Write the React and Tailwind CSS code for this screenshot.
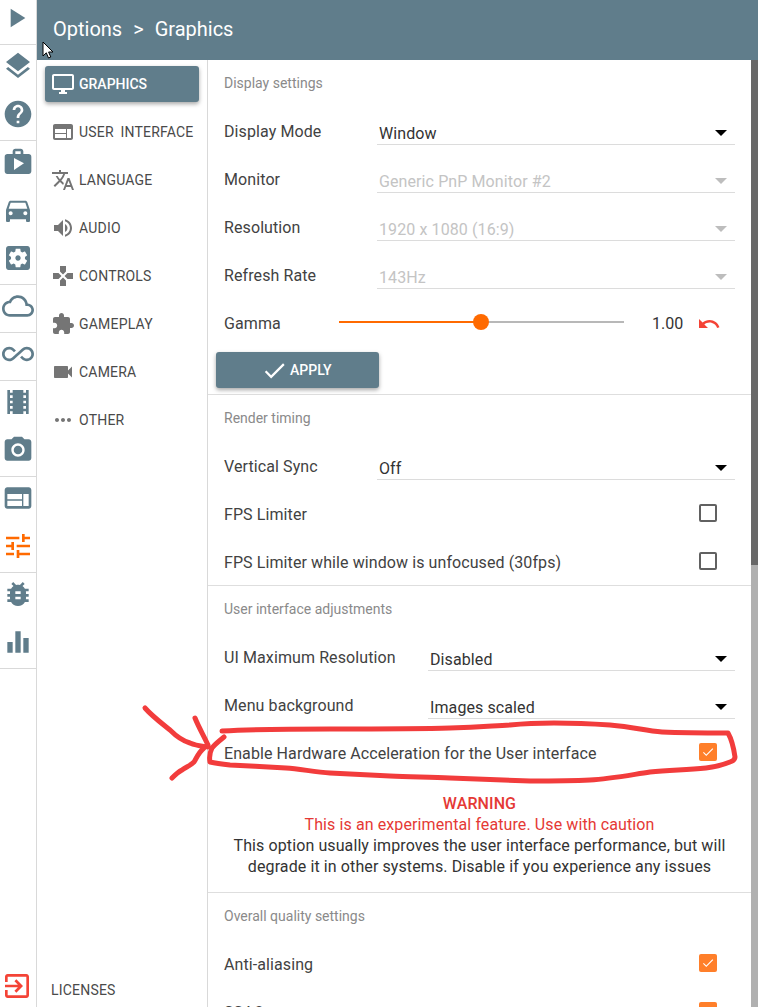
const icons = {
  play: "M8 5v14l11-7z",
  layers: "M11.99 18.54l-7.37-5.73L3 14.07l9 7 9-7-1.63-1.27-7.38 5.74zM12 16l7.36-5.73L21 9l-9-7-9 7 1.63 1.27L12 16z",
  help: "M12 2C6.48 2 2 6.48 2 12s4.48 10 10 10 10-4.48 10-10S17.52 2 12 2zm1 17h-2v-2h2v2zm2.07-7.75l-.9.92C13.45 12.9 13 13.5 13 15h-2v-.5c0-1.1.45-2.1 1.17-2.83l1.24-1.26c.37-.36.59-.86.59-1.41 0-1.1-.9-2-2-2s-2 .9-2 2H8c0-2.21 1.79-4 4-4s4 1.79 4 4c0 .88-.36 1.68-.93 2.25z",
  career: "M20 6h-4V4c0-1.11-.89-2-2-2h-4c-1.11 0-2 .89-2 2v2H4c-1.11 0-1.99.89-1.99 2L2 19c0 1.11.89 2 2 2h16c1.11 0 2-.89 2-2V8c0-1.11-.89-2-2-2zM10 4h4v2h-4V4zM9 18V9l7.5 4L9 18z",
  car: "M18.92 6.01C18.72 5.42 18.16 5 17.5 5h-11c-.66 0-1.21.42-1.42 1.01L3 12v8c0 .55.45 1 1 1h1c.55 0 1-.45 1-1v-1h12v1c0 .55.45 1 1 1h1c.55 0 1-.45 1-1v-8l-2.08-5.99zM6.5 16c-.83 0-1.5-.67-1.5-1.5S5.67 13 6.5 13s1.5.67 1.5 1.5S7.33 16 6.5 16zm11 0c-.83 0-1.5-.67-1.5-1.5s.67-1.5 1.5-1.5 1.5.67 1.5 1.5-.67 1.5-1.5 1.5zM5 11l1.5-4.5h11L19 11H5z",
  setup: "M12 10c-1.1 0-2 .9-2 2s.9 2 2 2 2-.9 2-2-.9-2-2-2zm7-7H5c-1.11 0-2 .9-2 2v14c0 1.1.89 2 2 2h14c1.11 0 2-.9 2-2V5c0-1.1-.89-2-2-2zm-1.75 9c0 .23-.02.46-.05.68l1.48 1.16c.13.11.17.3.08.45l-1.4 2.42c-.09.15-.27.21-.43.15l-1.74-.7c-.36.28-.76.51-1.18.69l-.26 1.85c-.03.17-.18.3-.35.3h-2.8c-.17 0-.32-.13-.35-.29l-.26-1.85c-.43-.18-.82-.41-1.18-.69l-1.74.7c-.16.06-.34 0-.43-.15l-1.4-2.42c-.09-.15-.05-.34.08-.45l1.48-1.16c-.03-.23-.05-.46-.05-.69 0-.23.02-.46.05-.68l-1.48-1.16c-.13-.11-.17-.3-.08-.45l1.4-2.42c.09-.15.27-.21.43-.15l1.74.7c.36-.28.76-.51 1.18-.69l.26-1.85c.03-.17.18-.3.35-.3h2.8c.17 0 .32.13.35.29l.26 1.85c.43.18.82.41 1.18.69l1.74-.7c.16-.06.34 0 .43.15l1.4 2.42c.09.15.05.34-.08.45l-1.48 1.16c.03.23.05.46.05.69z",
  cloud: "M19.35 10.04C18.67 6.59 15.64 4 12 4 9.11 4 6.6 5.64 5.35 8.04 2.34 8.36 0 10.91 0 14c0 3.31 2.69 6 6 6h13c2.76 0 5-2.24 5-5 0-2.64-2.05-4.78-4.65-4.96zM19 18H6c-2.21 0-4-1.79-4-4s1.79-4 4-4h.71C7.37 7.69 9.48 6 12 6c3.04 0 5.5 2.46 5.5 5.5v.5H19c1.66 0 3 1.34 3 3s-1.34 3-3 3z",
  infinity: "M18.6 6.62c-1.44 0-2.8.56-3.77 1.53L12 10.66 10.48 12h.01L7.8 14.39c-.64.64-1.49.99-2.4.99-1.87 0-3.39-1.51-3.39-3.38S3.53 8.62 5.4 8.62c.91 0 1.76.35 2.44 1.03l1.13 1 1.51-1.34L9.22 8.2C8.2 7.18 6.84 6.62 5.4 6.62 2.42 6.62 0 9.04 0 12s2.42 5.38 5.4 5.38c1.44 0 2.8-.56 3.77-1.53l2.83-2.5.01.01L13.52 12h-.01l2.69-2.39c.64-.64 1.49-.99 2.4-.99 1.87 0 3.39 1.51 3.39 3.38s-1.52 3.38-3.39 3.38c-.9 0-1.76-.35-2.44-1.03l-1.14-1.01-1.51 1.34 1.27 1.12c1.02 1.01 2.37 1.57 3.82 1.57 2.98 0 5.4-2.41 5.4-5.38s-2.42-5.37-5.4-5.37z",
  movie: "M18 3v2h-2V3H8v2H6V3H4v18h2v-2h2v2h8v-2h2v2h2V3h-2zM8 17H6v-2h2v2zm0-4H6v-2h2v2zm0-4H6V7h2v2zm10 8h-2v-2h2v2zm0-4h-2v-2h2v2zm0-4h-2V7h2v2z",
  camera: "M12 8.8a3.2 3.2 0 1 0 0 6.4 3.2 3.2 0 0 0 0-6.4zM9 2L7.17 4H4c-1.1 0-2 .9-2 2v12c0 1.1.9 2 2 2h16c1.1 0 2-.9 2-2V6c0-1.1-.9-2-2-2h-3.17L15 2H9zm3 15c-2.76 0-5-2.24-5-5s2.24-5 5-5 5 2.24 5 5-2.24 5-5 5z",
  web: "M20 4H4c-1.1 0-1.99.9-1.99 2L2 18c0 1.1.9 2 2 2h16c1.1 0 2-.9 2-2V6c0-1.1-.9-2-2-2zm-5 14H4v-4h11v4zm0-5H4V9h11v4zm5 5h-4V9h4v9z",
  tune: "M3 17v2h6v-2H3zM3 5v2h10V5H3zm10 16v-2h8v-2h-8v-2h-2v6h2zM7 9v2H3v2h4v2h2V9H7zm14 4v-2H11v2h10zm-6-4h2V7h4V5h-4V3h-2v6z",
  bug: "M20 8h-2.81c-.45-.78-1.07-1.45-1.82-1.96L17 4.41 15.59 3l-2.17 2.17C12.96 5.06 12.49 5 12 5c-.49 0-.96.06-1.41.17L8.41 3 7 4.41l1.62 1.63C7.88 6.55 7.26 7.22 6.81 8H4v2h2.09c-.05.33-.09.66-.09 1v1H4v2h2v1c0 .34.04.67.09 1H4v2h2.81c1.04 1.79 2.97 3 5.19 3s4.15-1.21 5.19-3H20v-2h-2.09c.05-.33.09-.66.09-1v-1h2v-2h-2v-1c0-.34-.04-.67-.09-1H20V8zm-6 8h-4v-2h4v2zm0-4h-4v-2h4v2z",
  chart: "M10 20h4V4h-4v16zm-6 0h4v-8H4v8zM16 9v11h4V9h-4z",
  exit: "M10.09 15.59L11.5 17l5-5-5-5-1.41 1.41L12.67 11H3v2h9.67l-2.58 2.59zM19 3H5c-1.11 0-2 .9-2 2v4h2V5h14v14H5v-4H3v4c0 1.1.89 2 2 2h14c1.1 0 2-.9 2-2V5c0-1.1-.9-2-2-2z",
  desktop: "M21 2H3c-1.1 0-2 .9-2 2v12c0 1.1.9 2 2 2h7v2H8v2h8v-2h-2v-2h7c1.1 0 2-.9 2-2V4c0-1.1-.9-2-2-2zm0 14H3V4h18v12z",
  translate: "M12.87 15.07l-2.54-2.51.03-.03c1.74-1.94 2.98-4.17 3.71-6.53H17V4h-7V2H8v2H1v1.99h11.17C11.5 7.92 10.44 9.75 9 11.35 8.07 10.32 7.3 9.19 6.69 8h-2c.73 1.63 1.73 3.17 2.98 4.56l-5.09 5.02L4 19l5-5 3.11 3.11.76-2.04zM18.5 10h-2L12 22h2l1.12-3h4.75L21 22h2l-4.5-12zm-2.62 7l1.62-4.33L19.12 17h-3.24z",
  volume: "M3 9v6h4l5 5V4L7 9H3zm13.5 3c0-1.77-1.02-3.29-2.5-4.03v8.05c1.48-.73 2.5-2.25 2.5-4.02zM14 3.23v2.06c2.89.86 5 3.54 5 6.71s-2.11 5.85-5 6.71v2.06c4.01-.91 7-4.49 7-8.77s-2.99-7.86-7-8.77z",
  gamepad: "M15 7.5V2H9v5.5l3 3 3-3zM7.5 9H2v6h5.5l3-3-3-3zM9 16.5V22h6v-5.5l-3-3-3 3zM16.5 9l-3 3 3 3H22V9h-5.5z",
  extension: "M20.5 11H19V7c0-1.1-.9-2-2-2h-4V3.5C13 2.12 11.88 1 10.5 1S8 2.12 8 3.5V5H4c-1.1 0-1.99.9-1.99 2v3.8H3.5c1.49 0 2.7 1.21 2.7 2.7s-1.21 2.7-2.7 2.7H2V20c0 1.1.9 2 2 2h3.8v-1.5c0-1.49 1.21-2.7 2.7-2.7 1.49 0 2.7 1.21 2.7 2.7V22H17c1.1 0 2-.9 2-2v-4h1.5c1.38 0 2.5-1.12 2.5-2.5S21.88 11 20.5 11z",
  videocam: "M17 10.5V7c0-.55-.45-1-1-1H4c-.55 0-1 .45-1 1v10c0 .55.45 1 1 1h12c.55 0 1-.45 1-1v-3.5l4 4v-11l-4 4z",
  more: "M6 10c-1.1 0-2 .9-2 2s.9 2 2 2 2-.9 2-2-.9-2-2-2zm12 0c-1.1 0-2 .9-2 2s.9 2 2 2 2-.9 2-2-.9-2-2-2zm-6 0c-1.1 0-2 .9-2 2s.9 2 2 2 2-.9 2-2-.9-2-2-2z",
  undo: "M12.5 8c-2.65 0-5.05.99-6.9 2.6L2 7v9h9l-3.62-3.62c1.39-1.16 3.16-1.88 5.12-1.88 3.54 0 6.55 2.31 7.6 5.5l2.37-.78C21.08 11.03 17.15 8 12.5 8z",
  done: "M9 16.2L4.8 12l-1.4 1.4L9 19 21 7l-1.4-1.4L9 16.2z",
};

function Icon({ name, className }) {
  return (
    <svg viewBox="0 0 24 24" fill="currentColor" className={className}>
      <path d={icons[name]} />
    </svg>
  );
}

const railGroups = [
  ["layers", "help"],
  ["career", "car", "setup"],
  ["cloud"],
  ["infinity"],
  ["movie", "camera"],
  ["web", "tune"],
  ["bug", "chart"],
];

const navItems = [
  ["desktop", "GRAPHICS"],
  ["web", "USER INTERFACE"],
  ["translate", "LANGUAGE"],
  ["volume", "AUDIO"],
  ["gamepad", "CONTROLS"],
  ["extension", "GAMEPLAY"],
  ["videocam", "CAMERA"],
  ["more", "OTHER"],
];

function Rail() {
  return (
    <div className="flex w-[37px] shrink-0 flex-col border-r border-[#d9d9d9] bg-white">
      <div className="flex h-[45px] items-center justify-center border-b border-[#d9d9d9] pb-[8px] text-[#607d8b]">
        <Icon name="play" className="h-8 w-8 -translate-x-0.5" />
      </div>
      {railGroups.map((group, i) => (
        <div key={i} className="border-b border-[#d9d9d9]">
          {group.map((name) => (
            <div
              key={name}
              className={`flex h-12 items-center justify-center pb-1.5 last:h-[47px] last:pb-[5px] ${name === "tune" ? "text-[#ff6a00]" : "text-[#607d8b]"}`}
            >
              <Icon name={name} className="h-8 w-8" />
            </div>
          ))}
        </div>
      ))}
      <div className="mt-auto flex h-[43px] items-start justify-center pt-1.5 text-[#f44336]">
        <Icon name="exit" className="h-8 w-8 -translate-x-px" />
      </div>
    </div>
  );
}

function SideNav() {
  return (
    <div className="flex w-[171px] shrink-0 flex-col border-r border-[#d9d9d9] pt-1.5 pl-2 pr-2">
      {navItems.map(([icon, label], i) => (
        <div
          key={label}
          className={`mb-3 flex h-9 items-center rounded-[3px] pl-1.5 text-sm [word-spacing:3px] ${
            i === 0 ? "bg-[#607d8b] font-medium text-white shadow-[0_2px_4px_rgba(0,0,0,0.35)]" : "tracking-[0.2px] text-[#4a4a4a]"
          }`}
        >
          <Icon name={icon} className={`mr-1 h-6 w-6 shrink-0 ${i === 0 ? "" : "text-[#757575]"}`} />
          {label}
        </div>
      ))}
      <div className="mt-auto mb-[7px] pl-1.5 text-sm tracking-[0.2px] text-[#4a4a4a]">LICENSES</div>
    </div>
  );
}

function Heading({ children }) {
  return <div className="flex h-[47px] items-center px-4 pb-0.5 text-sm text-[#8a8a8a]">{children}</div>;
}

function Select({ value, disabled, className }) {
  return (
    <div className={`relative flex h-6 items-center border-b border-[#dcdcdc] pl-0.5 text-base ${disabled ? "text-[#c4c4c4]" : "text-[#333333]"} ${className}`}>
      <span className="mt-[3px] tracking-[0.1px]">{value}</span>
      <span className={`absolute right-2 top-[9px] h-0 w-0 border-x-[6px] border-t-[6px] border-x-transparent ${disabled ? "border-t-[#bdbdbd]" : "border-t-black"}`} />
    </div>
  );
}

function SelectRow({ label, value, disabled, selectClass }) {
  return (
    <div className="flex h-12 items-center pl-4 pr-4 text-base text-[#424242]">
      <span className="mt-0.5 shrink-0 tracking-[0.1px]">{label}</span>
      <Select value={value} disabled={disabled} className={`ml-auto translate-y-0.5 ${selectClass}`} />
    </div>
  );
}

function CheckRow({ label, checked }) {
  return (
    <div className="flex h-12 items-center justify-between pl-4 pr-[34px] text-base text-[#424242]">
      <span className="mt-0.5 tracking-[0.09px]">{label}</span>
      {checked ? (
        <span className="mb-0.5 flex h-[18px] w-[18px] items-center justify-center rounded-[2px] bg-[#ff7f2a] text-white">
          <Icon name="done" className="h-3.5 w-3.5" />
        </span>
      ) : (
        <span className="mb-0.5 h-[18px] w-[18px] rounded-[2px] border-2 border-[#616161]" />
      )}
    </div>
  );
}

function Slider() {
  return (
    <div className="flex h-12 items-center pl-4 text-base text-[#424242]">
      <span className="mt-0.5 w-[115px] shrink-0 tracking-[0.1px]">Gamma</span>
      <div className="relative h-0.5 w-[285px] -translate-y-px bg-[#b8b8b8]">
        <div className="h-full w-[142px] bg-[#ff6a00]" />
        <span className="absolute left-[134px] top-[-7px] h-4 w-4 rounded-full bg-[#ff6a00]" />
      </div>
      <span className="ml-[28px] mt-0.5 text-[#333333]">1.00</span>
      <Icon name="undo" className="ml-[14px] mt-0.5 h-6 w-6 text-[#f44336]" />
    </div>
  );
}

function Annotation() {
  return (
    <svg viewBox="0 0 758 1007" className="pointer-events-none absolute inset-0 h-[1007px] w-[758px]" fill="none" stroke="#f23c3c" strokeWidth="5" strokeLinecap="round" strokeLinejoin="round">
      <path d="M222 731C260 729 300 729 330 729C370 729 420 729 450 728C480 727 490 726 510 725C530 723 540 723 554 723C575 723 595 724 610 725C635 727 645 731 662 732C685 733 705 733 728 733C732 740 734 750 735 757C735 760 733 761 730 762C720 766 715 767 706 768C685 770 670 770 650 772C630 775 610 779 590 780C570 781 550 781 530 781C500 780 475 779 450 778C430 777 410 777 390 776C370 775 350 774 330 773C315 772 300 769 286 768C265 767 250 766 230 765C222 764 215 763 210 762C209 757 210 752 212 748C215 744 219 741 224 737" />
      <path d="M145 708C152 716 160 722 170 730C177 737 183 741 190 743C197 746 202 746 208 747" />
      <path d="M195 718C199 728 204 736 208 745" />
      <path d="M204 748C199 752 197 757 194 762C190 766 186 767 182 770C178 772 175 775 172 778" />
    </svg>
  );
}

export default function App() {
  return (
    <div className="relative flex h-[1007px] w-[758px] overflow-hidden bg-white font-['Roboto',sans-serif]">
      <Rail />
      <div className="flex min-w-0 flex-1 flex-col">
        <div className="flex h-[60px] shrink-0 items-center bg-[#607d8b] pb-0.5 pl-4 text-xl text-white">
          <span>Options</span>
          <span className="mx-[11px]">&gt;</span>
          <span>Graphics</span>
        </div>
        <div className="flex min-h-0 flex-1">
          <SideNav />
          <div className="min-w-0 flex-1">
            <section className="border-b border-[#dedede]">
              <Heading>Display settings</Heading>
              <SelectRow label="Display Mode" value="Window" selectClass="w-[358px]" />
              <SelectRow label="Monitor" value="Generic PnP Monitor #2" disabled selectClass="w-[358px]" />
              <SelectRow label="Resolution" value="1920 x 1080 (16:9)" disabled selectClass="w-[358px]" />
              <SelectRow label="Refresh Rate" value="143Hz" disabled selectClass="w-[358px]" />
              <Slider />
              <div className="pb-1.5 pl-2 pt-[5px]">
                <button className="flex h-9 w-[163px] items-center rounded-[3px] bg-[#607d8b] pl-[45px] text-sm font-medium text-white shadow-[0_2px_4px_rgba(0,0,0,0.35)]">
                  <Icon name="done" className="mr-0.5 h-[27px] w-[27px]" />
                  APPLY
                </button>
              </div>
            </section>
            <section className="border-b border-[#dedede]">
              <Heading>Render timing</Heading>
              <SelectRow label="Vertical Sync" value="Off" selectClass="w-[358px]" />
              <CheckRow label="FPS Limiter" />
              <div className="-mb-px">
                <CheckRow label="FPS Limiter while window is unfocused (30fps)" />
              </div>
            </section>
            <section className="border-b border-[#dedede]">
              <Heading>User interface adjustments</Heading>
              <SelectRow label="UI Maximum Resolution" value="Disabled" selectClass="w-[307px]" />
              <SelectRow label="Menu background" value="Images scaled" selectClass="w-[307px]" />
              <CheckRow label="Enable Hardware Acceleration for the User interface" checked />
              <div className="h-[115px] pt-4 text-center text-base leading-[21px] tracking-[0.1px] text-[#333333]">
                <div className="font-medium text-[#e53935]">WARNING</div>
                <div className="text-[#e53935]">This is an experimental feature. Use with caution</div>
                <div>This option usually improves the user interface performance, but will</div>
                <div>degrade it in other systems. Disable if you experience any issues</div>
              </div>
            </section>
            <section>
              <Heading>Overall quality settings</Heading>
              <CheckRow label="Anti-aliasing" checked />
              <CheckRow label="SSAO" checked />
            </section>
          </div>
          <div className="flex w-[7px] shrink-0 flex-col bg-[#b0b0b0]">
            <div className="h-[505px] bg-[#686868]" />
          </div>
        </div>
      </div>
      <Annotation />
      <svg viewBox="0 0 12 19" className="absolute left-[42px] top-[41px] h-[19px] w-3">
        <path d="M1 1v14l3.3-3.2 2.2 5.2 2.3-1-2.2-5h4.4z" fill="white" stroke="black" strokeWidth="1" />
      </svg>
    </div>
  );
}
